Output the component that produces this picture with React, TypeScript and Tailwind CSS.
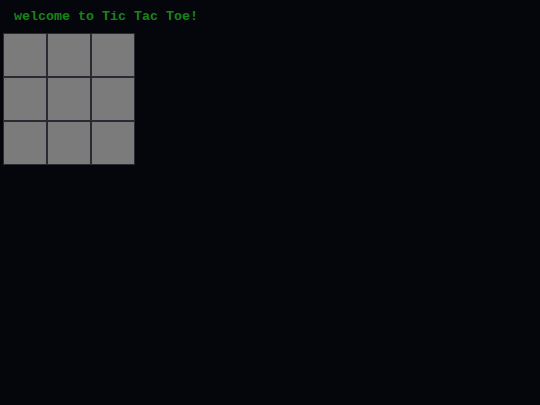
export default function App() {
  const cells = Array.from({ length: 9 }, (_, i) => i);
  return (
    <div className="min-h-[405px] w-full bg-[#05050c] pt-[9px] pl-[3px]">
      <p className="pl-[11px] font-['Liberation_Mono',monospace] text-[13.33px] font-bold leading-[16px] text-[#188418]">
        welcome to Tic Tac Toe!
      </p>
      <div className="mt-[8px] grid w-[132px] grid-cols-3">
        {cells.map((i) => (
          <div key={i} className="h-[44px] w-[44px] border border-[#2a2a32] bg-[#7b7b7b]" />
        ))}
      </div>
    </div>
  );
}
